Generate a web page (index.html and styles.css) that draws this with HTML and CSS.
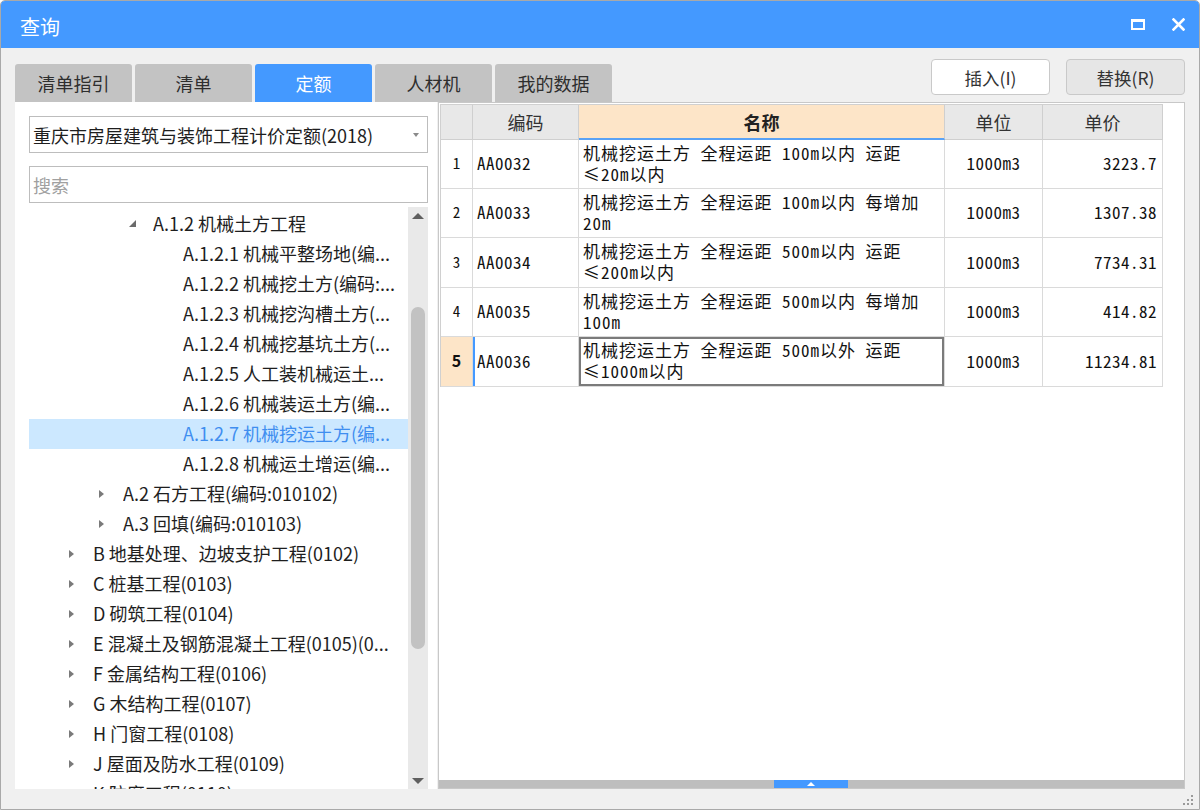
FILE: index.html
```html
<!DOCTYPE html>
<html lang="zh-CN">
<head>
<meta charset="utf-8">
<title>查询</title>
<link rel="stylesheet" href="styles.css">
</head>
<body>
<div class="window">
  <div class="titlebar">
    <span class="title">查询</span>
    <div class="ctrls">
      <span class="ico-max"></span>
      <svg class="ico-close" width="13" height="13" viewBox="0 0 13 13"><path d="M1.5 1.5 L11.5 11.5 M11.5 1.5 L1.5 11.5" stroke="#fff" stroke-width="2.6" stroke-linecap="square"/></svg>
    </div>
  </div>

  <div class="toolbar">
    <div class="tabs">
      <div class="tab">清单指引</div>
      <div class="tab">清单</div>
      <div class="tab active">定额</div>
      <div class="tab">人材机</div>
      <div class="tab">我的数据</div>
    </div>
    <div class="actions">
      <button class="btn">插入(I)</button>
      <button class="btn btn-alt">替换(R)</button>
    </div>
  </div>

  <div class="main">
    <div class="left">
      <div class="select"><span class="select-text">重庆市房屋建筑与装饰工程计价定额(2018)</span><i class="caret"></i></div>
      <div class="search">搜索</div>
      <div class="tree-area">
        <ul class="tree">
          <li class="node l2"><i class="tw open"><svg width="7" height="7" viewBox="0 0 7 7"><polygon points="7,0 7,7 0,7" fill="#6b6b6b"/></svg></i><span class="lbl">A.1.2 机械土方工程</span></li>
          <li class="node l3"><i class="tw"></i><span class="lbl">A.1.2.1 机械平整场地(编...</span></li>
          <li class="node l3"><i class="tw"></i><span class="lbl">A.1.2.2 机械挖土方(编码:...</span></li>
          <li class="node l3"><i class="tw"></i><span class="lbl">A.1.2.3 机械挖沟槽土方(...</span></li>
          <li class="node l3"><i class="tw"></i><span class="lbl">A.1.2.4 机械挖基坑土方(...</span></li>
          <li class="node l3"><i class="tw"></i><span class="lbl">A.1.2.5 人工装机械运土...</span></li>
          <li class="node l3"><i class="tw"></i><span class="lbl">A.1.2.6 机械装运土方(编...</span></li>
          <li class="node l3 sel"><i class="tw"></i><span class="lbl">A.1.2.7 机械挖运土方(编...</span></li>
          <li class="node l3"><i class="tw"></i><span class="lbl">A.1.2.8 机械运土增运(编...</span></li>
          <li class="node l1"><i class="tw closed"></i><span class="lbl">A.2 石方工程(编码:010102)</span></li>
          <li class="node l1"><i class="tw closed"></i><span class="lbl">A.3 回填(编码:010103)</span></li>
          <li class="node l0"><i class="tw closed"></i><span class="lbl">B 地基处理、边坡支护工程(0102)</span></li>
          <li class="node l0"><i class="tw closed"></i><span class="lbl">C 桩基工程(0103)</span></li>
          <li class="node l0"><i class="tw closed"></i><span class="lbl">D 砌筑工程(0104)</span></li>
          <li class="node l0"><i class="tw closed"></i><span class="lbl">E 混凝土及钢筋混凝土工程(0105)(0...</span></li>
          <li class="node l0"><i class="tw closed"></i><span class="lbl">F 金属结构工程(0106)</span></li>
          <li class="node l0"><i class="tw closed"></i><span class="lbl">G 木结构工程(0107)</span></li>
          <li class="node l0"><i class="tw closed"></i><span class="lbl">H 门窗工程(0108)</span></li>
          <li class="node l0"><i class="tw closed"></i><span class="lbl">J 屋面及防水工程(0109)</span></li>
          <li class="node l0 last"><i class="tw closed"></i><span class="lbl">K 防腐工程(0110)</span></li>
        </ul>
        <div class="vscroll">
          <span class="arr arr-up"></span>
          <div class="vtrack"><div class="vthumb"></div></div>
          <span class="arr arr-down"></span>
        </div>
      </div>
    </div>

    <div class="right">
      <div class="grid">
        <div class="hc"></div>
        <div class="hc">编码</div>
        <div class="hc hc-sel">名称</div>
        <div class="hc">单位</div>
        <div class="hc">单价</div>

        <div class="c rn">1</div>
        <div class="c code">AA0032</div>
        <div class="c name">机械挖运土方 全程运距 100m以内 运距<br>≤20m以内</div>
        <div class="c unit">1000m3</div>
        <div class="c price">3223.7</div>

        <div class="c rn">2</div>
        <div class="c code">AA0033</div>
        <div class="c name">机械挖运土方 全程运距 100m以内 每增加<br>20m</div>
        <div class="c unit">1000m3</div>
        <div class="c price">1307.38</div>

        <div class="c rn">3</div>
        <div class="c code">AA0034</div>
        <div class="c name">机械挖运土方 全程运距 500m以内 运距<br>≤200m以内</div>
        <div class="c unit">1000m3</div>
        <div class="c price">7734.31</div>

        <div class="c rn">4</div>
        <div class="c code">AA0035</div>
        <div class="c name">机械挖运土方 全程运距 500m以内 每增加<br>100m</div>
        <div class="c unit">1000m3</div>
        <div class="c price">414.82</div>

        <div class="c rn rn-cur">5</div>
        <div class="c code code-cur">AA0036</div>
        <div class="c name name-focus">机械挖运土方 全程运距 500m以外 运距<br>≤1000m以内</div>
        <div class="c unit">1000m3</div>
        <div class="c price">11234.81</div>
      </div>
      <div class="spacer"></div>
      <div class="hscroll"><div class="hthumb"><i class="hthumb-arr"></i></div></div>
    </div>
  </div>

  <div class="footer">
    <svg class="grip" width="12" height="12" viewBox="0 0 12 12">
      <rect x="9" y="1" width="2" height="2" fill="#9a9a9a"/>
      <rect x="5" y="5" width="2" height="2" fill="#9a9a9a"/>
      <rect x="9" y="5" width="2" height="2" fill="#9a9a9a"/>
      <rect x="1" y="9" width="2" height="2" fill="#9a9a9a"/>
      <rect x="5" y="9" width="2" height="2" fill="#9a9a9a"/>
      <rect x="9" y="9" width="2" height="2" fill="#9a9a9a"/>
    </svg>
  </div>
</div>
</body>
</html>
```

FILE: styles.css
```css
html, body {
  margin: 0;
  padding: 0;
  background: #ffffff;
}

body {
  font-family: "Noto Sans CJK SC", "Noto Sans", sans-serif;
  color: #222;
}

.window {
  width: 1200px;
  height: 810px;
  box-sizing: border-box;
  border: 1px solid #a9a9a9;
  border-radius: 5px 5px 0 0;
  overflow: hidden;
  background: #f0f0f0;
  display: flex;
  flex-direction: column;
}

/* title bar */
.titlebar {
  flex: none;
  height: 47px;
  background: #4499ff;
  display: flex;
  align-items: center;
  padding: 0 14px 0 19px;
  color: #fff;
}

.title {
  flex: 1;
  font-size: 20px;
  line-height: 20px;
  margin-top: 4px;
}

.ctrls {
  display: flex;
  align-items: center;
  gap: 27px;
}

.ico-max {
  display: block;
  width: 10px;
  height: 6px;
  border: 2px solid #fff;
  border-top-width: 3px;
}

.ico-close {
  display: block;
}

/* toolbar */
.toolbar {
  flex: none;
  height: 54px;
  display: flex;
  justify-content: space-between;
  padding: 0 14px;
}

.tabs {
  display: flex;
  gap: 3px;
  align-self: flex-end;
}

.tab {
  width: 117px;
  height: 38px;
  box-sizing: border-box;
  background: #c3c3c3;
  border-radius: 3px 3px 0 0;
  font-size: 18px;
  color: #2e2e2e;
  display: flex;
  align-items: center;
  justify-content: center;
}

.tab.active {
  background: #4499ff;
  color: #fff;
}

.actions {
  display: flex;
  gap: 16px;
  margin-top: 11px;
}

.btn {
  width: 119px;
  height: 36px;
  box-sizing: border-box;
  border: 1px solid #c9c9c9;
  border-radius: 4px;
  background: #fff;
  font-family: "Noto Sans CJK SC", "Noto Sans", sans-serif;
  font-size: 17.5px;
  color: #333;
  padding: 0;
}

.btn-alt {
  background: #e6e6e6;
}

/* main */
.main {
  flex: 1;
  min-height: 0;
  display: flex;
  gap: 1px;
  padding: 0 14px;
}

.left {
  width: 422px;
  flex: none;
  box-sizing: border-box;
  background: #fff;
  padding: 14px 9px 0 14px;
  display: flex;
  flex-direction: column;
}

.select,
.search {
  flex: none;
  height: 37px;
  box-sizing: border-box;
  border: 1px solid #bdbdbd;
  display: flex;
  align-items: center;
  padding: 0 8px 0 3px;
  font-size: 18px;
}

.select-text {
  flex: 1;
  color: #1e1e1e;
  white-space: nowrap;
}

.caret {
  width: 0;
  height: 0;
  border-left: 3.5px solid transparent;
  border-right: 3.5px solid transparent;
  border-top: 4px solid #8a8a8a;
}

.search {
  margin-top: 13px;
  color: #a0a0a0;
}

.tree-area {
  flex: 1;
  min-height: 0;
  margin-top: 4px;
  display: flex;
}

.tree {
  flex: 1;
  min-width: 0;
  margin: 0;
  padding: 2px 0 0;
  list-style: none;
  overflow: hidden;
}

.node {
  height: 30px;
  display: flex;
  align-items: center;
  font-size: 18px;
  color: #1e1e1e;
  white-space: nowrap;
}

.node .lbl {
  overflow: hidden;
  text-overflow: ellipsis;
  margin-top: -2px;
}

.l0 { padding-left: 40px; }
.l1 { padding-left: 70px; }
.l2 { padding-left: 100px; }
.l3 { padding-left: 130px; }

.tw {
  flex: none;
  width: 24px;
  height: 30px;
  display: flex;
  align-items: center;
}

.tw.open svg {
  display: block;
  margin-top: -1px;
}

.tw.closed::before {
  content: "";
  display: block;
  width: 0;
  height: 0;
  margin-top: -1px;
  border-left: 5px solid #7a7a7a;
  border-top: 4.5px solid transparent;
  border-bottom: 4.5px solid transparent;
}

.node.sel {
  background: #cce8ff;
  color: #3f8ef0;
}

.vscroll {
  flex: none;
  width: 20px;
  background: #e9e9e9;
  display: flex;
  flex-direction: column;
  align-items: center;
}

.arr {
  flex: none;
  width: 0;
  height: 0;
  border-left: 6px solid transparent;
  border-right: 6px solid transparent;
}

.arr-up {
  margin-top: 6px;
  border-bottom: 6px solid #5f5f5f;
}

.arr-down {
  margin-bottom: 5px;
  border-top: 6px solid #5f5f5f;
}

.vtrack {
  flex: 1;
  width: 100%;
  display: flex;
  justify-content: center;
}

.vthumb {
  width: 14px;
  height: 342px;
  margin-top: 88px;
  border-radius: 7px;
  background: #c2c2c2;
}

/* right panel */
.right {
  flex: 1;
  min-width: 0;
  box-sizing: border-box;
  border: 1px solid #c8c8c8;
  background: #fff;
  padding: 1px 0 0 1px;
  display: flex;
  flex-direction: column;
}

.grid {
  flex: none;
  display: grid;
  grid-template-columns: 32px 106px 366px 98px 120px;
  grid-template-rows: 35px 49px 49px 50px 49px 50px;
  width: 723px;
  box-sizing: border-box;
  border-left: 1px solid #d0d0d0;
  border-top: 1px solid #d0d0d0;
}

.hc {
  box-sizing: border-box;
  background: #e8e8e8;
  border-right: 1px solid #cfcfcf;
  border-bottom: 1px solid #cfcfcf;
  display: flex;
  align-items: center;
  justify-content: center;
  font-size: 18px;
  color: #333;
}

.hc-sel {
  background: #fde5c8;
  font-weight: bold;
  color: #222;
  border-bottom: 2px solid #5aa2f5;
}

.c {
  box-sizing: border-box;
  border-right: 1px solid #dadada;
  border-bottom: 1px solid #dadada;
  padding-bottom: 3px;
  display: flex;
  align-items: center;
  font-family: "Noto Sans Mono CJK SC", "Noto Sans CJK SC", monospace;
  font-size: 17px;
  letter-spacing: 0.5px;
  color: #111;
  white-space: nowrap;
}

.rn {
  justify-content: center;
  font-size: 15px;
  letter-spacing: 0;
}

.rn-cur {
  background: #fde5c8;
  font-family: "Noto Sans CJK SC", sans-serif;
  font-weight: bold;
  font-size: 16px;
}

.code {
  padding-left: 4px;
}

.code-cur {
  box-shadow: inset 2px 0 0 #4499ff;
}

.name {
  padding-left: 4px;
  line-height: 21px;
  letter-spacing: 1px;
}

.name-focus {
  box-shadow: inset 0 0 0 2px #7b7b7b;
}

.unit {
  justify-content: center;
}

.price {
  justify-content: flex-end;
  padding-right: 5px;
}

.spacer {
  flex: 1;
}

.hscroll {
  flex: none;
  height: 8px;
  margin-left: -1px;
  background: #bebebe;
  display: flex;
}

.hthumb {
  width: 74px;
  margin-left: 335px;
  background: #4499ff;
  display: flex;
  align-items: center;
  justify-content: center;
}

.hthumb-arr {
  width: 0;
  height: 0;
  border-left: 4px solid transparent;
  border-right: 4px solid transparent;
  border-bottom: 4px solid #fff;
}

.footer {
  flex: none;
  height: 20px;
  display: flex;
  justify-content: flex-end;
  align-items: flex-end;
  padding-right: 5px;
  padding-bottom: 3px;
  box-sizing: border-box;
}

.grip {
  display: block;
}
```
